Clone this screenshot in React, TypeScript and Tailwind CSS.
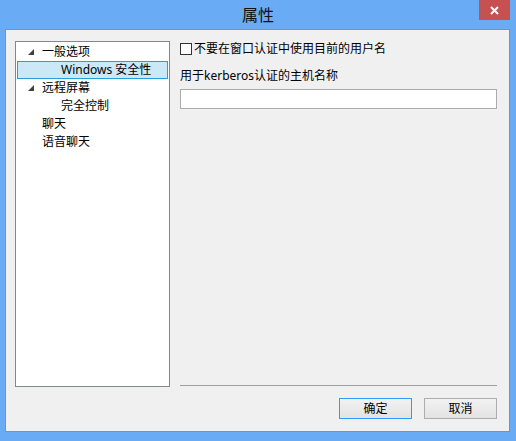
const font = { fontFamily: '"Noto Sans", "Noto Sans CJK SC", sans-serif' };

const Arrow = () => (
  <svg width="6" height="6" viewBox="0 0 6 6" className="shrink-0">
    <polygon points="6,0 6,6 0,6" fill="#404040" />
  </svg>
);

const TreeRow = ({
  label,
  level,
  arrow,
  selected,
}: {
  label: string;
  level: number;
  arrow?: boolean;
  selected?: boolean;
}) => (
  <div
    className={`mx-px flex h-[18px] items-center border ${
      selected ? "border-[#26a0da] bg-[#cbe8f6]" : "border-transparent"
    }`}
  >
    <div className="flex w-[24px] justify-end pr-[8px]">{arrow && <Arrow />}</div>
    <span className={`whitespace-nowrap ${level === 1 ? "pl-[19px]" : ""}`}>{label}</span>
  </div>
);

export default function App() {
  return (
    <div className="flex h-[441px] w-[516px] flex-col bg-[#69abf5] text-[12px] text-black" style={font}>
      <div className="relative flex h-[29px] shrink-0 items-center justify-center">
        <span className="text-[16px] text-[#111] leading-none">属性</span>
        <div className="absolute right-[6px] top-0 flex h-[20px] w-[31px] items-center justify-center bg-[#c75050]">
          <svg width="9" height="9" viewBox="0 0 9 9">
            <path d="M1 1L8 8M8 1L1 8" stroke="white" strokeWidth="2" />
          </svg>
        </div>
      </div>
      <div className="ml-[5px] mr-[6px] flex h-[403px] flex-col border border-[#5b9ad8] bg-[#f0f0f0] pl-[9px] pr-[12px] pt-[11px]">
        <div className="flex h-[346px]">
          <div className="flex w-[155px] flex-col border border-[#828790] bg-white pt-px">
            <TreeRow label="一般选项" level={0} arrow />
            <TreeRow label="Windows 安全性" level={1} selected />
            <TreeRow label="远程屏幕" level={0} arrow />
            <TreeRow label="完全控制" level={1} />
            <TreeRow label="聊天" level={0} />
            <TreeRow label="语音聊天" level={0} />
          </div>
          <div className="ml-[10px] flex flex-1 flex-col">
            <div className="mt-[2px] flex h-[12px] items-center">
              <div className="h-[12px] w-[12px] border border-[#333] bg-white" />
              <span className="ml-[2px]">不要在窗口认证中使用目前的用户名</span>
            </div>
            <div className="mt-[14px] h-[14px] leading-[14px]">用于kerberos认证的主机名称</div>
            <div className="mt-[6px] h-[20px] border border-[#ababab] bg-white" />
            <div className="flex-1" />
            <div className="h-px bg-[#a0a0a0]" />
            <div className="h-px" />
          </div>
        </div>
        <div className="mt-[11px] flex justify-end gap-[12px]">
          <button className="h-[21px] w-[73px] border border-[#3399ff] bg-gradient-to-b from-[#f2f2f2] to-[#e3e3e3] text-[12px] leading-none">
            确定
          </button>
          <button className="h-[21px] w-[73px] border border-[#adadad] bg-gradient-to-b from-[#f2f2f2] to-[#e3e3e3] text-[12px] leading-none">
            取消
          </button>
        </div>
      </div>
    </div>
  );
}
